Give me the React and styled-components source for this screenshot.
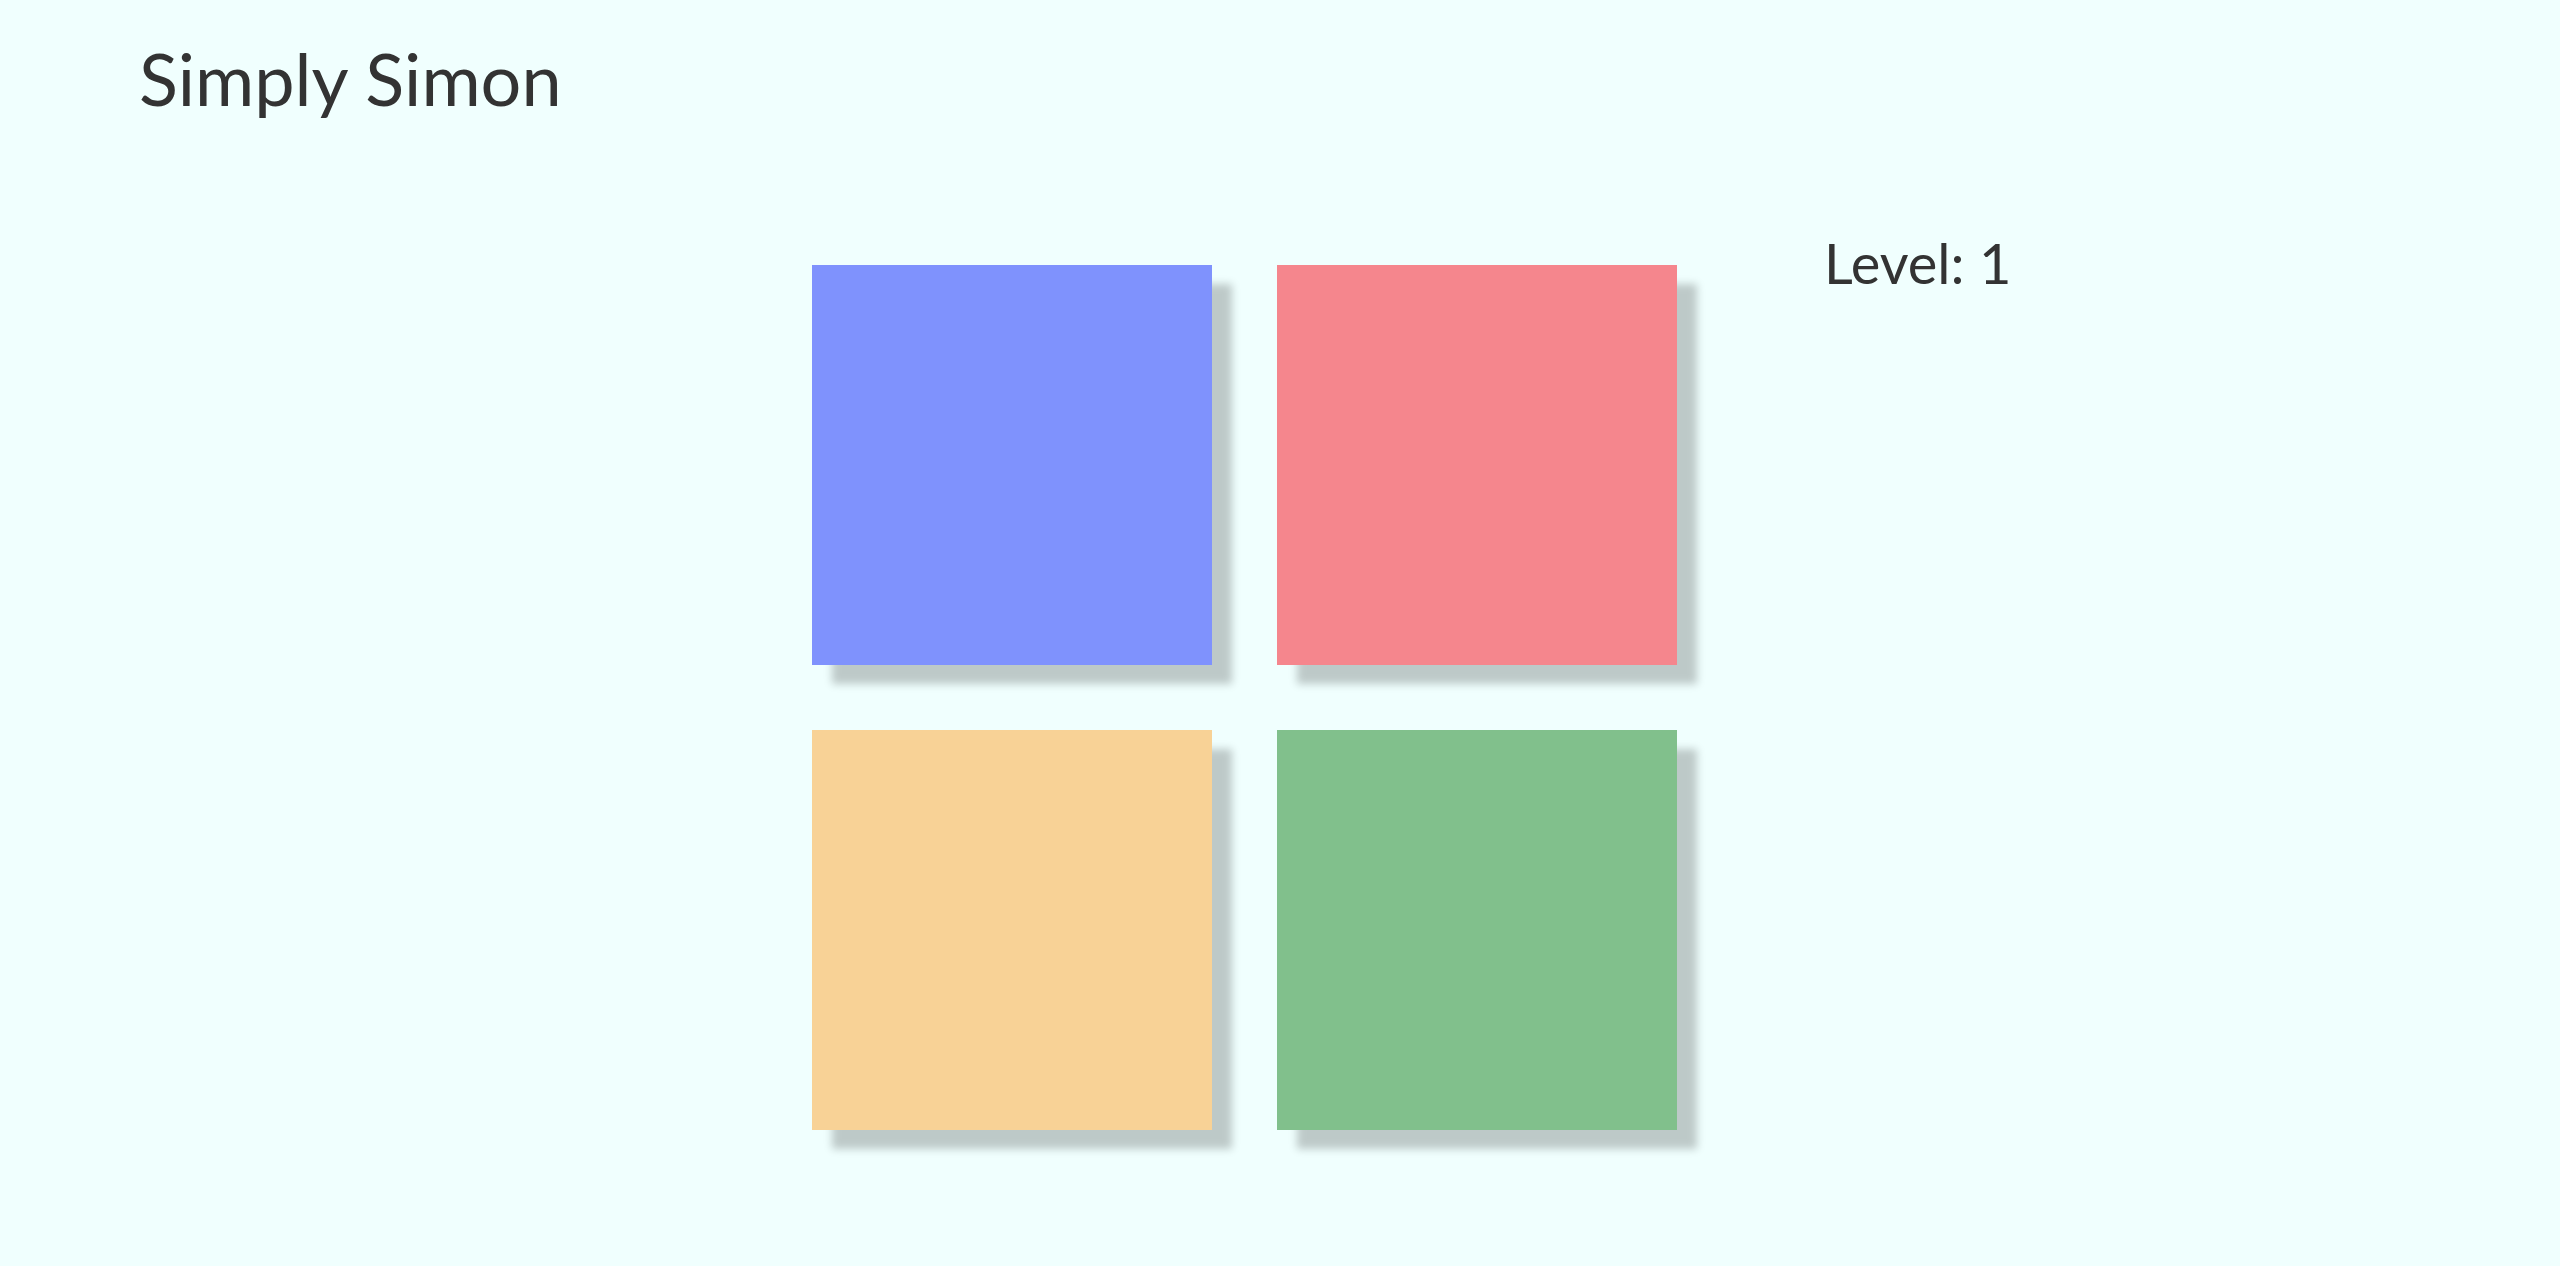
import React from "react";
import styled, { createGlobalStyle } from "styled-components";

const Global = createGlobalStyle`
  html, body {
    margin: 0;
    padding: 0;
    background: #f0fffe;
  }
  body {
    font-family: Lato, "Open Sans", sans-serif;
    color: #333333;
  }
`;

const Page = styled.div`
  min-height: 100vh;
  background: #f0fffe;
  box-sizing: border-box;
`;

const Header = styled.header`
  padding: 35px 0 0 139px;
`;

const Title = styled.h1`
  margin: 0;
  font-family: Lato, sans-serif;
  font-weight: 400;
  font-size: 72px;
  line-height: 1.2;
  color: #333333;
`;

const Main = styled.main`
  display: flex;
  align-items: flex-start;
  padding: 108px 0 0 812px;
`;

const Board = styled.div`
  display: grid;
  grid-template-columns: repeat(2, 400px);
  grid-auto-rows: 400px;
  gap: 65px;
  margin-top: 36px;
`;

const Pad = styled.button`
  border: none;
  padding: 0;
  margin: 0;
  cursor: pointer;
  background: ${(p) => p.$color};
  box-shadow: 20px 19px 8px rgba(0, 0, 0, 0.21);
`;

const Level = styled.div`
  margin-left: 147px;
  font-family: Lato, sans-serif;
  font-size: 56px;
  line-height: 1.2;
  color: #333333;
`;

const pads = [
  { id: "blue", color: "#7f92fd" },
  { id: "red", color: "#f5868d" },
  { id: "yellow", color: "#f8d296" },
  { id: "green", color: "#81c08c" },
];

export default function App() {
  return (
    <Page>
      <Global />
      <Header>
        <Title>Simply Simon</Title>
      </Header>
      <Main>
        <Board>
          {pads.map((p) => (
            <Pad key={p.id} $color={p.color} aria-label={p.id} />
          ))}
        </Board>
        <Level>Level: 1</Level>
      </Main>
    </Page>
  );
}
